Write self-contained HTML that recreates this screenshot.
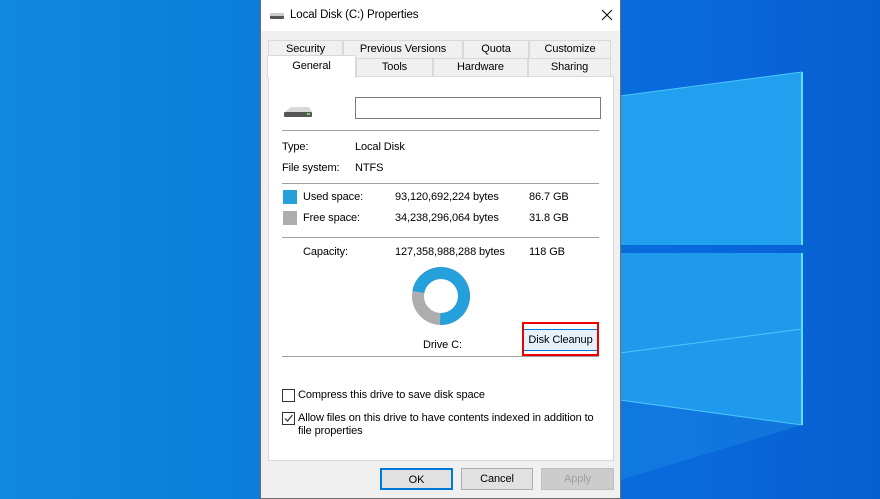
<!DOCTYPE html>
<html><head><style>
*{margin:0;padding:0;box-sizing:border-box}
body{width:880px;height:499px;overflow:hidden;position:relative;font-family:"Liberation Sans",sans-serif;font-size:11px;letter-spacing:-0.1px;color:#000;background:linear-gradient(90deg,#1088dd 0%,#0a7ad8 40%,#0868dc 80%,#075fcf 100%)}
.a{position:absolute;white-space:nowrap}
.win{position:absolute;left:260px;top:0;width:361px;height:499px;background:#f0f0f0;border:1px solid #6d6d6d;border-top:none}
.title{position:absolute;left:0;top:0;width:100%;height:31px;background:#fff}
.tab{position:absolute;height:19px;border:1px solid #d9d9d9;background:#f0f0f0;text-align:center;line-height:17px}
.panel{position:absolute;left:7px;top:76px;width:346px;height:385px;background:#fff;border:1px solid #d9d9d9}
.sep{position:absolute;height:1px;background:#a0a0a0}
.btn{position:absolute;height:22px;border:1px solid #adadad;background:#e1e1e1;text-align:center;line-height:20px}
.cb{position:absolute;width:13px;height:13px;border:1px solid #333;background:#fff}
</style></head><body>
<svg class="a" style="left:0;top:0" width="880" height="499">
<polygon points="620,96 802,72 802,245 620,245" fill="#21a0f0"/>
<polygon points="620,253 802,253 802,425 620,400" fill="#1f99ec"/>
<polygon points="620,400 802,425 620,480" fill="#1e8fe6" opacity="0.4"/>
<line x1="802" y1="72" x2="802" y2="245" stroke="#5fe0ff" stroke-width="2"/>
<line x1="802" y1="253" x2="802" y2="425" stroke="#5fe0ff" stroke-width="2"/>
<line x1="620" y1="96" x2="802" y2="72" stroke="#4cc6fb" stroke-width="1"/>
<line x1="620" y1="400" x2="802" y2="425" stroke="#4cc6fb" stroke-width="1"/>
<line x1="620" y1="353" x2="802" y2="329" stroke="#4cc6fb" stroke-width="1"/>
</svg>
<div class="win">
 <div class="title">
  <svg class="a" style="left:9px;top:13px" width="14" height="7"><rect x="0" y="2" width="14" height="4" rx="1" fill="#555"/><rect x="0" y="0" width="14" height="3" rx="1" fill="#ccc"/></svg>
  <div class="a" style="left:29px;top:9px;font-size:11.5px">Local Disk (C:) Properties</div>
  <svg class="a" style="left:340px;top:9px" width="12" height="12"><path d="M1 1L11 11M11 1L1 11" stroke="#111" stroke-width="1.1"/></svg>
 </div>
 <div class="tab" style="left:7px;top:40px;width:75px">Security</div>
 <div class="tab" style="left:82px;top:40px;width:120px">Previous Versions</div>
 <div class="tab" style="left:202px;top:40px;width:66px">Quota</div>
 <div class="tab" style="left:268px;top:40px;width:82px">Customize</div>
 <div class="tab" style="left:95px;top:58px;width:77px">Tools</div>
 <div class="tab" style="left:172px;top:58px;width:95px">Hardware</div>
 <div class="tab" style="left:267px;top:58px;width:83px">Sharing</div>
 <div class="panel"></div>
 <div class="tab" style="left:6px;top:55px;width:89px;height:23px;background:#fff;border-bottom:none;line-height:21px">General</div>
 <svg class="a" style="left:22px;top:103px" width="30" height="16"><path d="M2 9 L8 4 L26 4 L29 9 Z" fill="#d8d8d8"/><rect x="1" y="9" width="28" height="5" rx="1" fill="#555"/><rect x="24" y="10" width="3" height="2" fill="#7ad04a"/></svg>
 <div class="a" style="left:94px;top:97px;width:246px;height:22px;border:1px solid #7a7a7a;background:#fff"></div>
 <div class="sep" style="left:21px;top:130px;width:317px"></div>
 <div class="a" style="left:21px;top:141px">Type:</div><div class="a" style="left:94px;top:141px">Local Disk</div>
 <div class="a" style="left:21px;top:162px">File system:</div><div class="a" style="left:94px;top:162px">NTFS</div>
 <div class="sep" style="left:21px;top:183px;width:317px"></div>
 <div class="a" style="left:22px;top:190px;width:14px;height:14px;background:#26a0da"></div>
 <div class="a" style="left:42px;top:191px">Used space:</div><div class="a" style="left:134px;top:191px">93,120,692,224 bytes</div><div class="a" style="left:268px;top:191px">86.7 GB</div>
 <div class="a" style="left:22px;top:211px;width:14px;height:14px;background:#adadad"></div>
 <div class="a" style="left:42px;top:212px">Free space:</div><div class="a" style="left:134px;top:212px">34,238,296,064 bytes</div><div class="a" style="left:268px;top:212px">31.8 GB</div>
 <div class="sep" style="left:21px;top:237px;width:317px"></div>
 <div class="a" style="left:42px;top:246px">Capacity:</div><div class="a" style="left:134px;top:246px">127,358,988,288 bytes</div><div class="a" style="left:268px;top:246px">118 GB</div>
 <svg class="a" style="left:150px;top:266px" width="60" height="60"><circle cx="30" cy="30" r="23" fill="none" stroke="#adadad" stroke-width="12"/><circle cx="30" cy="30" r="23" fill="none" stroke="#26a0da" stroke-width="12" stroke-dasharray="105 200" transform="rotate(190 30 30)"/></svg>
 <div class="a" style="left:162px;top:339px">Drive C:</div>
 <div class="btn" style="left:261px;top:329px;width:77px;background:#e5f1fb;border-color:#0078d7">Disk Cleanup</div>
 <div class="a" style="left:261px;top:322px;width:77px;height:34px;border:2px solid #e00"></div>
 <div class="sep" style="left:21px;top:356px;width:317px"></div>
 <div class="cb" style="left:21px;top:389px"></div><div class="a" style="left:37px;top:389px">Compress this drive to save disk space</div>
 <div class="cb" style="left:21px;top:412px"><svg width="11" height="11" style="position:absolute;left:0;top:0"><path d="M2 5.5 L4.5 8 L9.5 2" stroke="#333" stroke-width="1.2" fill="none"/></svg></div>
 <div class="a" style="left:37px;top:412px">Allow files on this drive to have contents indexed in addition to</div>
 <div class="a" style="left:37px;top:425px">file properties</div>
 <div class="btn" style="left:119px;top:468px;width:73px;border:2px solid #0078d7">OK</div>
 <div class="btn" style="left:200px;top:468px;width:72px">Cancel</div>
 <div class="btn" style="left:280px;top:468px;width:73px;color:#a0a0a0;background:#cccccc;border-color:#bfbfbf">Apply</div>
</div>
</body></html>
